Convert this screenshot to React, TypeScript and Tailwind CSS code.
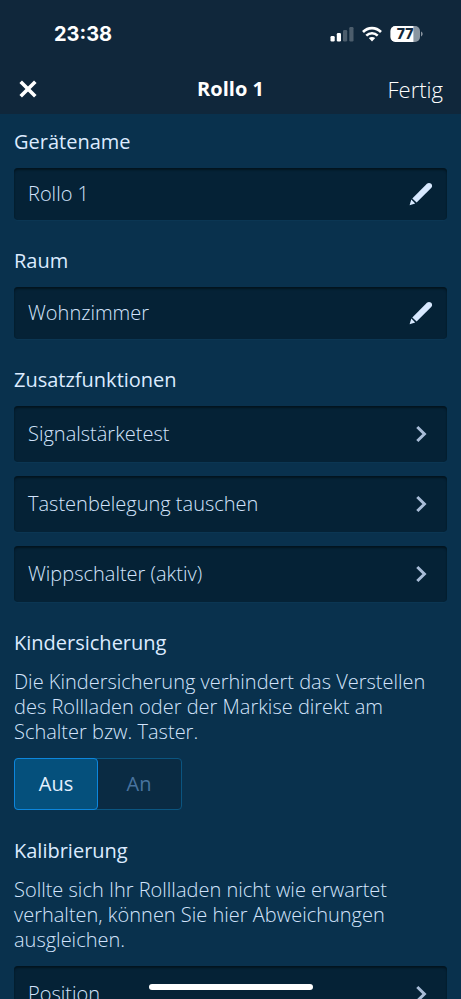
import { useState } from 'react'

const heading = 'block h-6 text-xl leading-6 font-medium text-[#dcebff]'
const paragraph = 'mt-3.5 text-xl leading-[25px] font-light text-[#d3e4fc]'
const card =
  'w-full flex items-center rounded-sm bg-[#052236] pl-3.5 shadow-[inset_0_2px_2px_#03151f,0_1px_0_#0b3653]'

const EXTRA_FUNCTIONS = ['Signalstärketest', 'Tastenbelegung tauschen', 'Wippschalter (aktiv)']

const CHILD_LOCK_OPTIONS = [
  { value: 'off', label: 'Aus' },
  { value: 'on', label: 'An' },
]

const SignalIcon = () => (
  <svg className="w-6 h-4" viewBox="0 0 24 16" fill="currentColor" aria-hidden="true">
    <rect x="0.5" y="10" width="4.2" height="5.4" rx="1.2" />
    <rect x="6.8" y="7" width="4.2" height="8.4" rx="1.2" />
    <rect x="13" y="4" width="4.2" height="11.4" rx="1.2" opacity="0.25" />
    <rect x="19.3" y="1" width="4.2" height="14.4" rx="1.2" opacity="0.25" />
  </svg>
)

const WifiIcon = () => (
  <svg className="w-5 h-4" viewBox="0 0 20 16" fill="none" stroke="currentColor" strokeWidth="2.6" aria-hidden="true">
    <path d="M1 6 C6 0.8 14 0.8 19 6" />
    <path d="M4.3 9.6 C7.6 6.4 12.4 6.4 15.7 9.6" />
    <path d="M10 15.4 L6.8 12.1 C8.6 10.5 11.4 10.5 13.2 12.1 Z" fill="currentColor" stroke="none" />
  </svg>
)

const BatteryIcon = () => (
  <svg className="w-[34px] h-4" viewBox="0 0 34 16" aria-hidden="true">
    <clipPath id="battery-level">
      <rect width="23.4" height="16" />
    </clipPath>
    <rect x="0.5" width="29.5" height="16" rx="5" fill="#8995a0" />
    <rect x="0.5" width="29.5" height="16" rx="5" fill="#fff" clipPath="url(#battery-level)" />
    <path d="M31 5.6 C33.2 6.3 33.2 9.7 31 10.4 Z" fill="#8995a0" />
    <text x="15" y="13" textAnchor="middle" className="font-['Inter'] text-[14px] font-extrabold" fill="#10273b">
      77
    </text>
  </svg>
)

const CloseIcon = () => (
  <svg className="w-5 h-5" viewBox="0 0 20 20" fill="none" stroke="currentColor" strokeWidth="3.6" aria-hidden="true">
    <path d="M2.7 2.7 L17.3 17.3 M17.3 2.7 L2.7 17.3" />
  </svg>
)

const PencilIcon = () => (
  <svg className="w-6 h-6" viewBox="0 0 24 24" fill="currentColor" aria-hidden="true">
    <path d="M3.3 16.4 L17.9 1.8 C19.1 0.6 20.9 0.6 22.2 1.8 C23.4 3.1 23.4 4.9 22.2 6.1 L7.6 20.6 Z" />
    <path d="M2.3 17.6 L6.2 21.5 L0.6 23.2 Z" />
  </svg>
)

const ChevronIcon = () => (
  <svg className="w-3 h-[18px]" viewBox="0 0 12 18" fill="none" stroke="currentColor" strokeWidth="3" aria-hidden="true">
    <path d="M2.3 2 L9.4 9 L2.3 16" />
  </svg>
)

const EditField = ({ id, label, defaultValue }: { id: string; label: string; defaultValue: string }) => (
  <div>
    <label htmlFor={id} className={heading}>
      {label}
    </label>
    <div className={`${card} mt-3.5 h-[52px] pr-3.5`}>
      <input
        id={id}
        defaultValue={defaultValue}
        className="min-w-0 grow bg-transparent text-xl font-light text-[#d3e4fc] outline-none"
      />
      <button type="button" aria-label={`${label} bearbeiten`} className="text-[#d8e9ff]">
        <PencilIcon />
      </button>
    </div>
  </div>
)

const LinkRow = ({ label }: { label: string }) => (
  <button type="button" className={`${card} h-14 shrink-0 justify-between pr-5 text-xl font-light text-[#d3e4fc]`}>
    {label}
    <span className="text-[#a9bdd8]">
      <ChevronIcon />
    </span>
  </button>
)

export default function App() {
  const [childLock, setChildLock] = useState('off')

  return (
    <div className="relative flex h-dvh flex-col overflow-hidden bg-[#09314d] font-['Open_Sans',sans-serif]">
      <header className="shrink-0 bg-[#10273b] pb-1 text-white">
        <div className="flex h-[68px] items-center justify-between pr-[37px] pl-[54px]">
          <time className="font-['Inter',sans-serif] text-xl leading-6 font-bold">23:38</time>
          <div className="flex items-center gap-2">
            <SignalIcon />
            <WifiIcon />
            <BatteryIcon />
          </div>
        </div>
        <div className="grid h-[42px] grid-cols-[1fr_auto_1fr] items-center px-[18px]">
          <button type="button" aria-label="Schließen" className="justify-self-start">
            <CloseIcon />
          </button>
          <h1 className="text-xl leading-6 font-bold">Rollo 1</h1>
          <button type="button" className="justify-self-end text-[22px] leading-6 font-light">
            Fertig
          </button>
        </div>
      </header>

      <main className="min-h-0 grow space-y-[29px] overflow-y-auto px-3.5 pt-4 [scrollbar-width:none]">
        <EditField id="device-name" label="Gerätename" defaultValue="Rollo 1" />
        <EditField id="room" label="Raum" defaultValue="Wohnzimmer" />

        <section>
          <h2 className={heading}>Zusatzfunktionen</h2>
          <div className="mt-3.5 flex flex-col gap-3.5">
            {EXTRA_FUNCTIONS.map((label) => (
              <LinkRow key={label} label={label} />
            ))}
          </div>
        </section>

        <section>
          <h2 id="child-lock" className={heading}>
            Kindersicherung
          </h2>
          <p className={paragraph}>
            Die Kindersicherung verhindert das Verstellen des Rollladen oder der Markise direkt am Schalter bzw. Taster.
          </p>
          <div
            role="radiogroup"
            aria-labelledby="child-lock"
            className="mt-3.5 inline-flex h-[52px] rounded-sm border border-[#0b5580] bg-[#0a2b43] align-top"
          >
            {CHILD_LOCK_OPTIONS.map(({ value, label }) => (
              <label
                key={value}
                className="relative -my-px -ml-px flex w-[84px] cursor-pointer items-center justify-center rounded-sm border border-transparent text-xl text-[#48739f] has-checked:border-[#0c86dd] has-checked:bg-[#05507c] has-checked:font-medium has-checked:text-[#e4f0ff]"
              >
                <input
                  type="radio"
                  name="child-lock"
                  value={value}
                  checked={childLock === value}
                  onChange={() => setChildLock(value)}
                  className="sr-only"
                />
                {label}
              </label>
            ))}
          </div>
        </section>

        <section>
          <h2 className={heading}>Kalibrierung</h2>
          <p className={paragraph}>
            Sollte sich Ihr Rollladen nicht wie erwartet verhalten, können Sie hier Abweichungen ausgleichen.
          </p>
          <div className="mt-3.5 flex flex-col">
            <LinkRow label="Position" />
          </div>
        </section>
      </main>

      <div className="absolute bottom-[9px] left-1/2 h-1.5 w-[164px] -translate-x-1/2 rounded-full bg-white" />
    </div>
  )
}
